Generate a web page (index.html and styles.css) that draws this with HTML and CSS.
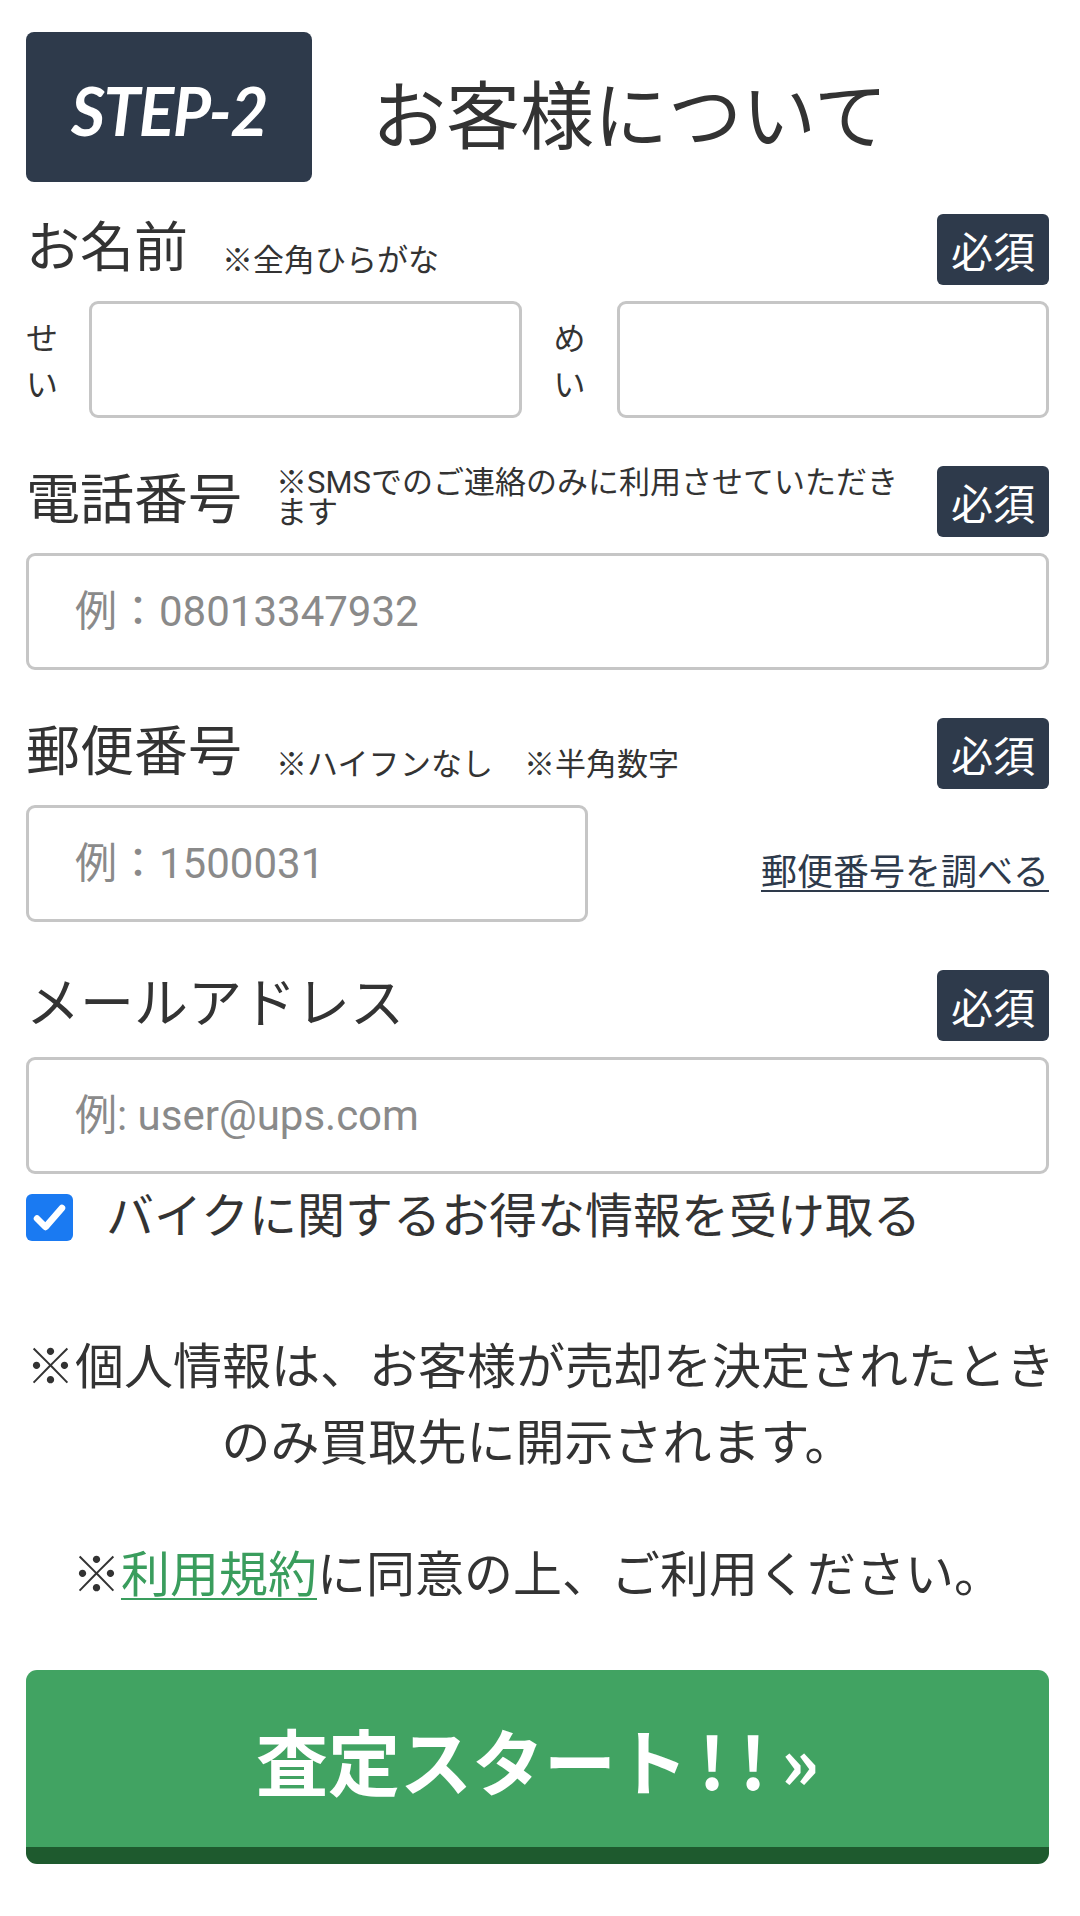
FILE: index.html
```html
<!DOCTYPE html>
<html lang="ja">
<head>
<meta charset="utf-8">
<title>STEP-2 お客様について</title>
<link rel="stylesheet" href="styles.css">
</head>
<body>
<div class="page">
  <header class="step-head">
    <div class="step-badge">STEP-2</div>
    <h1 class="step-title">お客様について</h1>
  </header>

  <section class="field">
    <div class="field-head">
      <div class="field-title"><span class="label">お名前</span><span class="note">※全角ひらがな</span></div>
      <span class="req">必須</span>
    </div>
    <div class="name-row">
      <div class="name-half"><span class="kana">せ<br>い</span><input class="input" type="text"></div>
      <div class="name-half"><span class="kana">め<br>い</span><input class="input" type="text"></div>
    </div>
  </section>

  <section class="field">
    <div class="field-head">
      <div class="field-title"><span class="label">電話番号</span><span class="note">※SMSでのご連絡のみに利用させていただきます</span></div>
      <span class="req">必須</span>
    </div>
    <input class="input input-gap" type="tel" placeholder="例：08013347932">
  </section>

  <section class="field">
    <div class="field-head">
      <div class="field-title"><span class="label">郵便番号</span><span class="note">※ハイフンなし　※半角数字</span></div>
      <span class="req">必須</span>
    </div>
    <div class="postal-row">
      <input class="input postal-input" type="text" placeholder="例：1500031">
      <a class="postal-link" href="#">郵便番号を調べる</a>
    </div>
  </section>

  <section class="field">
    <div class="field-head">
      <div class="field-title"><span class="label">メールアドレス</span></div>
      <span class="req">必須</span>
    </div>
    <input class="input input-gap" type="email" placeholder="例: user@ups.com">
  </section>

  <label class="check-row">
    <span class="checkbox"><svg viewBox="0 0 47 47" width="47" height="47"><path d="M11 24.5 L19.5 33 L36 14" fill="none" stroke="#fff" stroke-width="6.5" stroke-linecap="round" stroke-linejoin="round"/></svg></span>
    <span class="check-text">バイクに関するお得な情報を受け取る</span>
  </label>

  <p class="notice">※個人情報は、お客様が売却を決定されたとき<br>のみ買取先に開示されます。</p>

  <p class="terms">※<a href="#" class="terms-link">利用規約</a>に同意の上、ご利用ください。</p>

  <button class="submit" type="button">査定スタート<span class="bang">!!</span>»</button>
</div>
</body>
</html>
```

FILE: styles.css
```css
html, body {
  margin: 0;
  padding: 0;
  background: #ffffff;
}

body {
  font-family: Roboto, "Noto Sans CJK JP", sans-serif;
  color: #333333;
}

.page {
  padding: 32px 31px 40px 26px;
}

/* header */
.step-head {
  display: flex;
  align-items: center;
  height: 150px;
  margin-bottom: 32px;
}

.step-badge {
  width: 286px;
  height: 150px;
  flex: none;
  background: #2e3a4b;
  border-radius: 8px;
  display: flex;
  align-items: center;
  justify-content: center;
  color: #ffffff;
  font-family: Lato, "Open Sans", sans-serif;
  font-style: italic;
  font-weight: 700;
  font-size: 66px;
  letter-spacing: -1.5px;
  padding-top: 6px;
  box-sizing: border-box;
}

.step-title {
  margin: 0 0 0 60px;
  padding-top: 8px;
  font-family: "Noto Sans CJK JP", sans-serif;
  font-size: 74px;
  font-weight: 400;
  line-height: 1;
  color: #333333;
}

/* fields */
.field {
  margin-bottom: 48px;
}

.field-head {
  display: flex;
  align-items: flex-end;
  justify-content: space-between;
  gap: 20px;
  height: 71px;
}

.field-title {
  display: flex;
  align-items: flex-end;
  gap: 34px;
  flex: 1;
  min-width: 0;
  padding-bottom: 4px;
}

.label {
  font-size: 54px;
  line-height: 64px;
  white-space: nowrap;
  flex: none;
}

.note {
  font-size: 31px;
  line-height: 30px;
  margin-bottom: 5px;
}

.req {
  flex: none;
  align-self: flex-start;
  background: #2e3a4b;
  color: #ffffff;
  font-family: "Noto Sans CJK JP", sans-serif;
  font-size: 42px;
  line-height: 71px;
  height: 71px;
  padding: 0 14px;
  border-radius: 6px;
}

.input {
  display: block;
  width: 100%;
  height: 117px;
  box-sizing: border-box;
  margin: 0;
  border: 3px solid #c6c6c6;
  border-radius: 9px;
  background: #ffffff;
  padding: 0 46px;
  font-family: Roboto, "Noto Sans CJK JP", sans-serif;
  font-size: 42px;
  color: #333333;
  outline: none;
}

.input::placeholder {
  color: #8a8a8a;
}

.input-gap {
  margin-top: 16px;
}

/* name */
.name-row {
  margin-top: 16px;
  display: grid;
  grid-template-columns: 1fr 1fr;
  column-gap: 32px;
}

.name-half {
  display: flex;
  align-items: center;
}

.kana {
  flex: none;
  width: 34px;
  margin-right: 29px;
  font-size: 32px;
  line-height: 46px;
  padding-top: 4px;
}

/* postal */
.postal-row {
  margin-top: 16px;
  display: flex;
  align-items: center;
}

.postal-input {
  width: 562px;
  flex: none;
}

.postal-link {
  margin-left: auto;
  margin-top: 18px;
  font-size: 36px;
  line-height: 40px;
  color: #2e3a4b;
  text-decoration: underline;
  text-decoration-thickness: 2px;
  text-underline-offset: 5px;
}

/* checkbox */
.check-row {
  display: flex;
  align-items: center;
  gap: 33px;
  margin-top: -30px;
}

.checkbox {
  flex: none;
  width: 47px;
  height: 47px;
  background: #1a7af2;
  border-radius: 6px;
  display: block;
}

.checkbox svg {
  display: block;
}

.check-text {
  font-size: 48px;
  line-height: 50px;
  white-space: nowrap;
}

/* notes */
.notice {
  margin: 88px 0 0;
  text-align: center;
  font-size: 49px;
  line-height: 76px;
  white-space: nowrap;
}

.terms {
  margin: 56px 0 0;
  text-align: center;
  font-size: 49px;
  line-height: 76px;
}

.terms-link {
  color: #3a9d5d;
  text-decoration: underline;
  text-decoration-thickness: 2px;
  text-underline-offset: 6px;
}

/* submit */
.submit {
  display: flex;
  align-items: center;
  justify-content: center;
  width: 100%;
  height: 194px;
  margin-top: 56px;
  box-sizing: border-box;
  border: none;
  border-bottom: 17px solid #1e5a2e;
  border-radius: 11px;
  background: #41a362;
  color: #ffffff;
  font-family: "Noto Sans CJK JP", sans-serif;
  font-size: 72px;
  font-weight: 700;
  padding: 0;
  cursor: pointer;
}

.bang {
  letter-spacing: 0.2em;
  margin-left: 0.15em;
}
```
